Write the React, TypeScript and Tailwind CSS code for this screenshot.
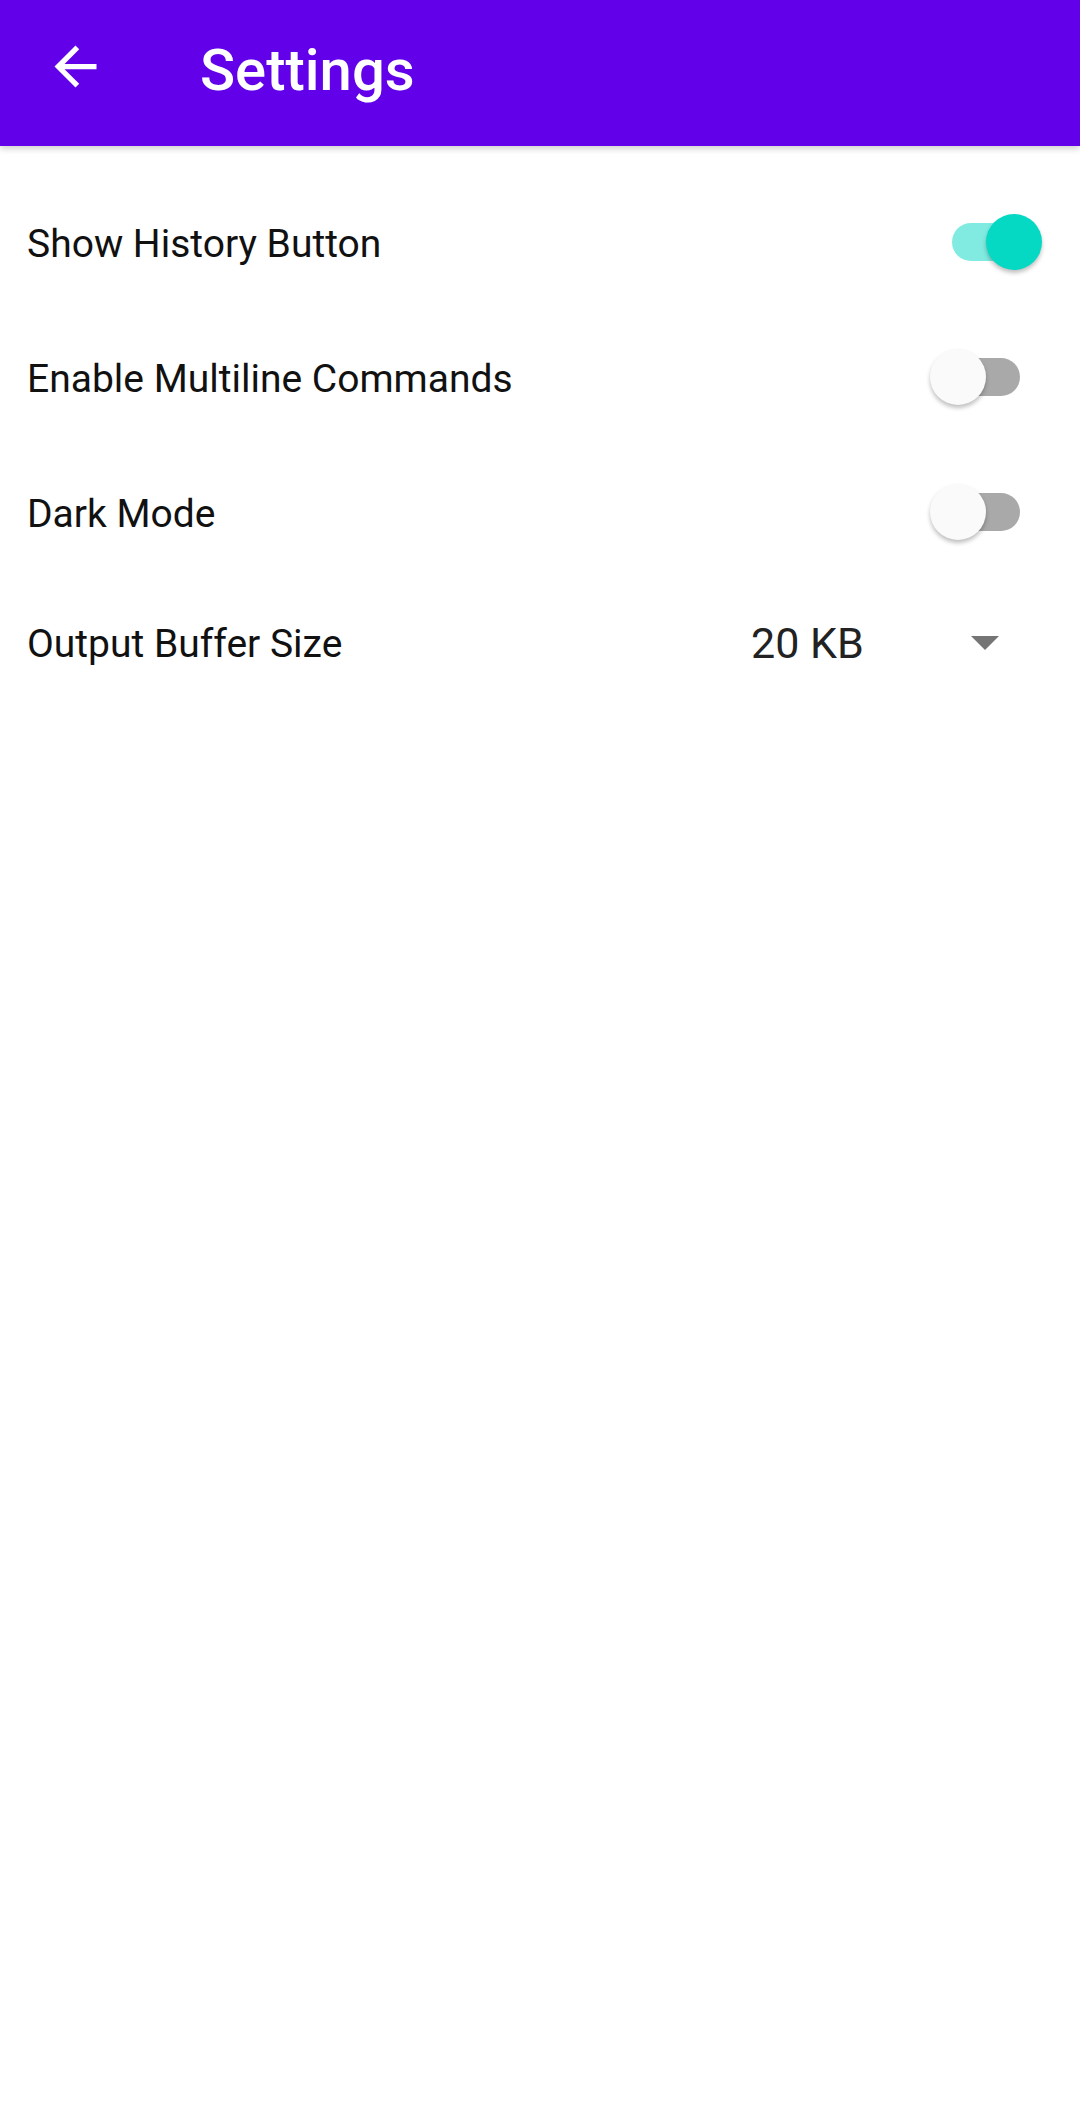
import { useState } from 'react';

type SwitchProps = {
  checked: boolean;
  onChange: () => void;
};

function Toggle({ checked, onChange }: SwitchProps) {
  return (
    <button
      onClick={onChange}
      aria-pressed={checked}
      className="relative w-[112px] h-[56px] shrink-0 focus:outline-none"
    >
      {/* Track */}
      <span
        className={
          checked
            ? 'absolute left-[22px] top-[9px] w-[68px] h-[38px] rounded-full bg-[#81ebe1]'
            : 'absolute left-[22px] top-[9px] w-[68px] h-[38px] rounded-full bg-[#a9a9a9]'
        }
      />
      {/* Thumb */}
      <span
        className={
          checked
            ? 'absolute left-[56px] top-0 w-[56px] h-[56px] rounded-full bg-[#05d9c4] shadow-[0_3px_4px_rgba(0,0,0,0.25)]'
            : 'absolute left-0 top-0 w-[56px] h-[56px] rounded-full bg-[#fafafa] shadow-[0_3px_4px_rgba(0,0,0,0.25)]'
        }
      />
    </button>
  );
}

export default function App() {
  const [showHistory, setShowHistory] = useState(true);
  const [multiline, setMultiline] = useState(false);
  const [darkMode, setDarkMode] = useState(false);

  return (
    <div className="min-h-screen bg-white font-['Roboto','Liberation_Sans',sans-serif]">
      {/* App Bar */}
      <header className="relative z-10 h-[146px] bg-[#6200ea] flex items-start shadow-[0_3px_6px_rgba(0,0,0,0.18)]">
        <button className="ml-[44px] mt-[35px] w-[63px] h-[63px] text-white" aria-label="Back">
          <svg viewBox="0 0 24 24" width="63" height="63" fill="currentColor">
            <path d="M20 11H7.83l5.59-5.59L12 4l-8 8 8 8 1.41-1.41L7.83 13H20v-2z" />
          </svg>
        </button>
        <h1 className="ml-[93px] mt-[41px] text-[58px] leading-none font-medium text-white">Settings</h1>
      </header>

      {/* Settings list */}
      <div className="pt-[28px]">
        <div className="h-[135px] flex items-center pl-[27px] pr-[38px]">
          <span className="flex-1 mt-[5px] text-[39px] leading-none text-[#111]">Show History Button</span>
          <Toggle checked={showHistory} onChange={() => setShowHistory(!showHistory)} />
        </div>

        <div className="h-[135px] flex items-center pl-[27px] pr-[38px]">
          <span className="flex-1 mt-[5px] text-[39px] leading-none text-[#111]">Enable Multiline Commands</span>
          <Toggle checked={multiline} onChange={() => setMultiline(!multiline)} />
        </div>

        <div className="h-[135px] flex items-center pl-[27px] pr-[38px]">
          <span className="flex-1 mt-[5px] text-[39px] leading-none text-[#111]">Dark Mode</span>
          <Toggle checked={darkMode} onChange={() => setDarkMode(!darkMode)} />
        </div>

        <div className="h-[128px] flex items-center pl-[27px] pr-[81px]">
          <span className="flex-1 mt-[2px] text-[39px] leading-none text-[#111]">Output Buffer Size</span>
          <div className="w-[248px] flex items-center justify-between">
            <span className="text-[43px] leading-none text-[#222]">20 KB</span>
            <svg width="28" height="14" viewBox="0 0 28 14">
              <path d="M0 0h28L14 14z" fill="#757575" />
            </svg>
          </div>
        </div>
      </div>
    </div>
  );
}
